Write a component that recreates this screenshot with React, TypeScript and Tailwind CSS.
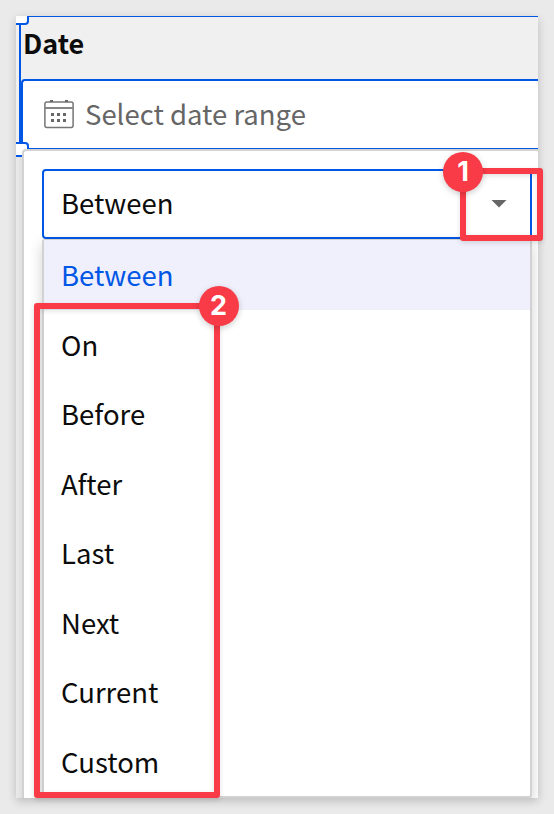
const options = ['Between', 'On', 'Before', 'After', 'Last', 'Next', 'Current', 'Custom'];

function CalendarIcon() {
  return (
    <svg className="mb-[2px] ml-[21px] h-[30px] w-[30px] shrink-0" viewBox="0 0 30 30" fill="none">
      <rect x="0.9" y="2.9" width="28.2" height="25.6" rx="2" stroke="#757575" strokeWidth="1.5" />
      <path d="M1 9H29" stroke="#858585" strokeWidth="2" />
      <path
        d="M6 1H9V3H6zM21 1H24V3H21zM7 14H10V17H7zM13 14H16V17H13zM19 14H22V17H19zM7 20H10V23H7zM13 20H16V23H13zM19 20H22V23H19z"
        fill="#686868"
      />
    </svg>
  );
}

function Badge({ label, className }: { label: string; className: string }) {
  return (
    <div
      className={`absolute flex h-10 w-10 items-center justify-center rounded-full bg-[#f93b47] pb-px font-['Inter',sans-serif] text-[27px] leading-none font-bold text-white shadow-[0_2px_6px_rgba(0,0,0,0.2)] ${className}`}
    >
      {label}
    </div>
  );
}

export default function App() {
  return (
    <main className="relative h-[814px] w-[554px] overflow-hidden bg-[#eaeaea] p-4 font-['Noto_Sans_CJK_SC',sans-serif] text-[27.5px] text-[#0c0c0c]">
      <div className="h-[782px] w-[522px] shadow-[0_3px_9px_rgba(0,0,0,0.2)]">
        <section className="relative flex h-full w-full flex-col overflow-hidden bg-[#f0f0f0]">
          <div className="h-[133px] shrink-0 border-t border-b border-[#0057e5] pl-[3px]">
            <div className="flex h-full flex-col border-l-2 border-[#0057e5]">
              <label className="flex h-[62px] shrink-0 items-center pb-[12px] pl-[2px] text-[27px] leading-none font-bold">
                Date
              </label>
              <div className="flex flex-1 items-center rounded-l-[4px] border-t-2 border-l-2 border-[#0057e5] bg-white">
                <CalendarIcon />
                <span className="ml-[11px] pb-[2px] leading-none whitespace-nowrap text-[#666]">Select date range</span>
              </div>
            </div>
          </div>
          <div className="flex flex-1 flex-col bg-[linear-gradient(90deg,#eaeaea,#dedede_7px)] pl-[6px]">
            <div className="flex flex-1 flex-col overflow-hidden rounded-tl-[4px] border-t-2 border-l-2 border-[#d2d2d2] bg-white pt-[18px] pl-[18px]">
              <button className="flex h-[70px] w-[490px] shrink-0 items-center justify-between rounded-[4px] border-2 border-[#0057e5] bg-white pr-[23px] pl-[17px] text-left">
                <span className="pb-[2px] leading-none">Between</span>
                <svg className="h-[8px] w-[16px]" viewBox="0 0 16 8">
                  <path d="M0.5 0H15.5L8 7.5z" fill="#666" />
                </svg>
              </button>
              <ul className="h-[559px] w-[490px] shrink-0 rounded-[3px] border-2 border-t-1 border-[#d2d2d2] bg-white shadow-[0_5px_14px_rgba(0,0,0,0.18)]">
                {options.map((option, index) => (
                  <li
                    key={option}
                    className={`flex h-[69.55px] items-center pl-[17px] leading-none ${
                      index === 0 ? 'bg-[#f0f0fc] text-[#0057e5]' : ''
                    }`}
                  >
                    {option}
                  </li>
                ))}
              </ul>
            </div>
          </div>
          <span className="absolute -top-[6px] -left-[4px] h-[15px] w-[17px] rounded-[4px] border-2 border-[#0057e5] bg-white" />
          <span className="absolute top-[126px] -left-[4px] h-[15px] w-[17px] rounded-[4px] border-2 border-[#0057e5] bg-white" />
          <span className="absolute top-[133px] left-[6px] h-[12px] w-[14px] rounded-tl-[4px] border-t-2 border-l-2 border-[#d2d2d2] bg-white" />
        </section>
      </div>
      <div className="absolute top-[168px] left-[460px] h-[73px] w-[83px] rounded-[3px] border-6 border-[#f93b47] shadow-[0_2px_5px_rgba(0,0,0,0.12),inset_0_2px_5px_rgba(0,0,0,0.12)]" />
      <Badge label="1" className="top-[152px] left-[443px]" />
      <div className="absolute top-[303px] left-[33.5px] h-[495px] w-[186.5px] rounded-[3px] border-6 border-[#f93b47] shadow-[0_2px_5px_rgba(0,0,0,0.12),inset_0_2px_5px_rgba(0,0,0,0.12)]" />
      <Badge label="2" className="top-[286px] left-[198.5px]" />
    </main>
  );
}
